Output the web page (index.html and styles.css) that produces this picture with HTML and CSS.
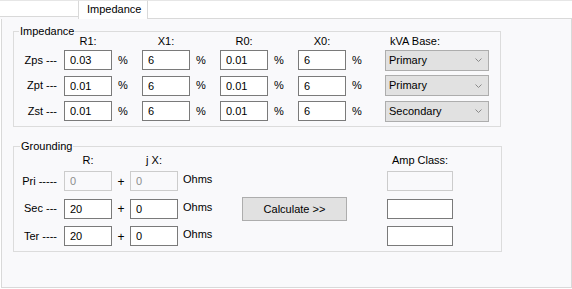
FILE: index.html
```html
<!DOCTYPE html>
<html lang="en">
<head>
    <meta charset="UTF-8">
    <title>Impedance</title>
    <link rel="stylesheet" href="styles.css">
</head>
<body>
    <!-- Tab strip -->
    <div class="tabstrip">
        <div class="tab-edge"></div>
        <div class="tab active">Impedance</div>
        <div class="tab-fill"></div>
    </div>

    <div class="tabpage">
        <!-- Impedance -->
        <section class="group imp">
            <div class="group-title">Impedance</div>
            <div class="imp-grid head">
                <span></span>
                <span class="col-head">R1:</span><span></span>
                <span class="col-head">X1:</span><span></span>
                <span class="col-head">R0:</span><span></span>
                <span class="col-head">X0:</span><span></span>
                <span class="col-head left">kVA Base:</span>
            </div>
            <div class="imp-grid rows">
                <span class="row-label">Zps ---</span>
                <input type="text" value="0.03"><span class="unit">%</span>
                <input type="text" value="6"><span class="unit">%</span>
                <input type="text" value="0.01"><span class="unit">%</span>
                <input type="text" value="6"><span class="unit">%</span>
                <div class="combo"><span>Primary</span><svg width="7" height="4" viewBox="0 0 7 4"><polyline points="0.5,0.5 3.5,3.5 6.5,0.5" /></svg></div>

                <span class="row-label">Zpt ---</span>
                <input type="text" value="0.01"><span class="unit">%</span>
                <input type="text" value="6"><span class="unit">%</span>
                <input type="text" value="0.01"><span class="unit">%</span>
                <input type="text" value="6"><span class="unit">%</span>
                <div class="combo"><span>Primary</span><svg width="7" height="4" viewBox="0 0 7 4"><polyline points="0.5,0.5 3.5,3.5 6.5,0.5" /></svg></div>

                <span class="row-label">Zst ---</span>
                <input type="text" value="0.01"><span class="unit">%</span>
                <input type="text" value="6"><span class="unit">%</span>
                <input type="text" value="0.01"><span class="unit">%</span>
                <input type="text" value="6"><span class="unit">%</span>
                <div class="combo"><span>Secondary</span><svg width="7" height="4" viewBox="0 0 7 4"><polyline points="0.5,0.5 3.5,3.5 6.5,0.5" /></svg></div>
            </div>
        </section>

        <!-- Grounding -->
        <section class="group gnd">
            <div class="group-title">Grounding</div>
            <div class="gnd-grid head">
                <span></span>
                <span class="col-head">R:</span><span></span>
                <span class="col-head">j X:</span><span></span>
                <span></span>
                <span class="col-head">Amp Class:</span>
            </div>
            <div class="gnd-grid rows">
                <span class="row-label">Pri -----</span>
                <input type="text" value="0" disabled><span class="plus">+</span>
                <input type="text" value="0" disabled><span class="ohms">Ohms</span>
                <span></span>
                <input type="text" class="amp" disabled>

                <span class="row-label">Sec ---</span>
                <input type="text" value="20"><span class="plus">+</span>
                <input type="text" value="0"><span class="ohms">Ohms</span>
                <button class="calc">Calculate &gt;&gt;</button>
                <input type="text" class="amp">

                <span class="row-label">Ter ----</span>
                <input type="text" value="20"><span class="plus">+</span>
                <input type="text" value="0"><span class="ohms">Ohms</span>
                <span></span>
                <input type="text" class="amp">
            </div>
        </section>
    </div>
</body>
</html>
```

FILE: styles.css
```css
/* Base */
* {
    margin: 0;
    padding: 0;
    box-sizing: border-box;
}

body {
    background: #ffffff;
    color: #000;
    font-family: "Liberation Sans", Arial, sans-serif;
    font-size: 11px;
    line-height: 13px;
}

/* Tab strip */
.tabstrip {
    display: flex;
    height: 19px;
    background: #f9f9fb;
}

.tab-edge {
    width: 78px;
    height: 17px;
    background: #fff;
    border-top: 1px solid #e6e6e6;
    border-bottom: 1px solid #d9d9d9;
}

.tab {
    width: 70px;
    height: 19px;
    padding: 2px 0 0 8px;
    background: #fff;
    border-left: 1px solid #d9d9d9;
    border-right: 1px solid #d9d9d9;
    border-top: 1px solid #e6e6e6;
}

.tab-fill {
    flex: 1;
    height: 19px;
    background: #fff;
    border-top: 1px solid #e6e6e6;
    border-bottom: 1px solid #d9d9d9;
}

/* Tab page */
.tabpage {
    margin-left: 1px;
    width: 571px;
    height: 269px;
    background: #f9f9fb;
    border: 1px solid #d9d9d9;
    border-top: none;
    padding-top: 12px;
}

/* Group boxes */
.group {
    margin-left: 11px;
    border: 1px solid #dcdcdc;
}

.group.imp {
    width: 488px;
    padding-bottom: 5px;
}

.group.gnd {
    width: 489px;
    margin-top: 19px;
    padding-bottom: 5px;
}

.group-title {
    width: fit-content;
    margin: -7px 0 -6px 5px;
    padding: 0 1px;
    background: #f9f9fb;
}

.gnd .group-title {
    margin-left: 6px;
}

/* Grids */
.imp-grid {
    display: grid;
    grid-template-columns: 50px 48px 30px 48px 30px 48px 30px 48px 39px 104px;
    align-items: center;
}

.imp-grid.head {
    padding-top: 3px;
    margin-bottom: 2px;
}

.imp-grid.rows {
    grid-auto-rows: 20px;
    row-gap: 5.5px;
}

.gnd-grid {
    display: grid;
    grid-template-columns: 50px 48px 18px 48px 64px 145px 66px;
    align-items: center;
}

.gnd-grid.head {
    padding-top: 7px;
    margin-bottom: 4px;
}

.gnd-grid.rows {
    grid-auto-rows: 20px;
    row-gap: 7.5px;
}

.col-head {
    text-align: center;
}

.col-head.left {
    text-align: left;
    padding-left: 5px;
}

.row-label {
    text-align: right;
    padding-right: 7px;
}

.unit {
    padding-left: 6px;
}

.plus {
    text-align: center;
    font-size: 12px;
    padding-top: 2px;
}

.ohms {
    padding-left: 5px;
    margin-top: -3px;
}

/* Controls */
input {
    width: 48px;
    height: 20px;
    border: 1px solid #7a7a7a;
    border-radius: 0;
    padding: 0 0 0 5px;
    background: #fff;
    color: #000;
    font-family: "Liberation Sans", Arial, sans-serif;
    font-size: 11px;
    outline: none;
}

input:disabled {
    border-color: #cccccc;
    background: #f9f9fb;
    color: #8d8d8d;
}

input.amp {
    width: 66px;
}

.combo {
    display: flex;
    justify-content: space-between;
    align-items: center;
    width: 104px;
    height: 21px;
    padding: 0 6px 0 3px;
    background: #e1e1e1;
    border: 1px solid #adadad;
}

.combo polyline {
    fill: none;
    stroke: #8a8a8a;
    stroke-width: 1;
}

.calc {
    width: 105px;
    height: 24px;
    background: #e1e1e1;
    border: 1px solid #adadad;
    color: #000;
    font-family: "Liberation Sans", Arial, sans-serif;
    font-size: 11px;
}
```
